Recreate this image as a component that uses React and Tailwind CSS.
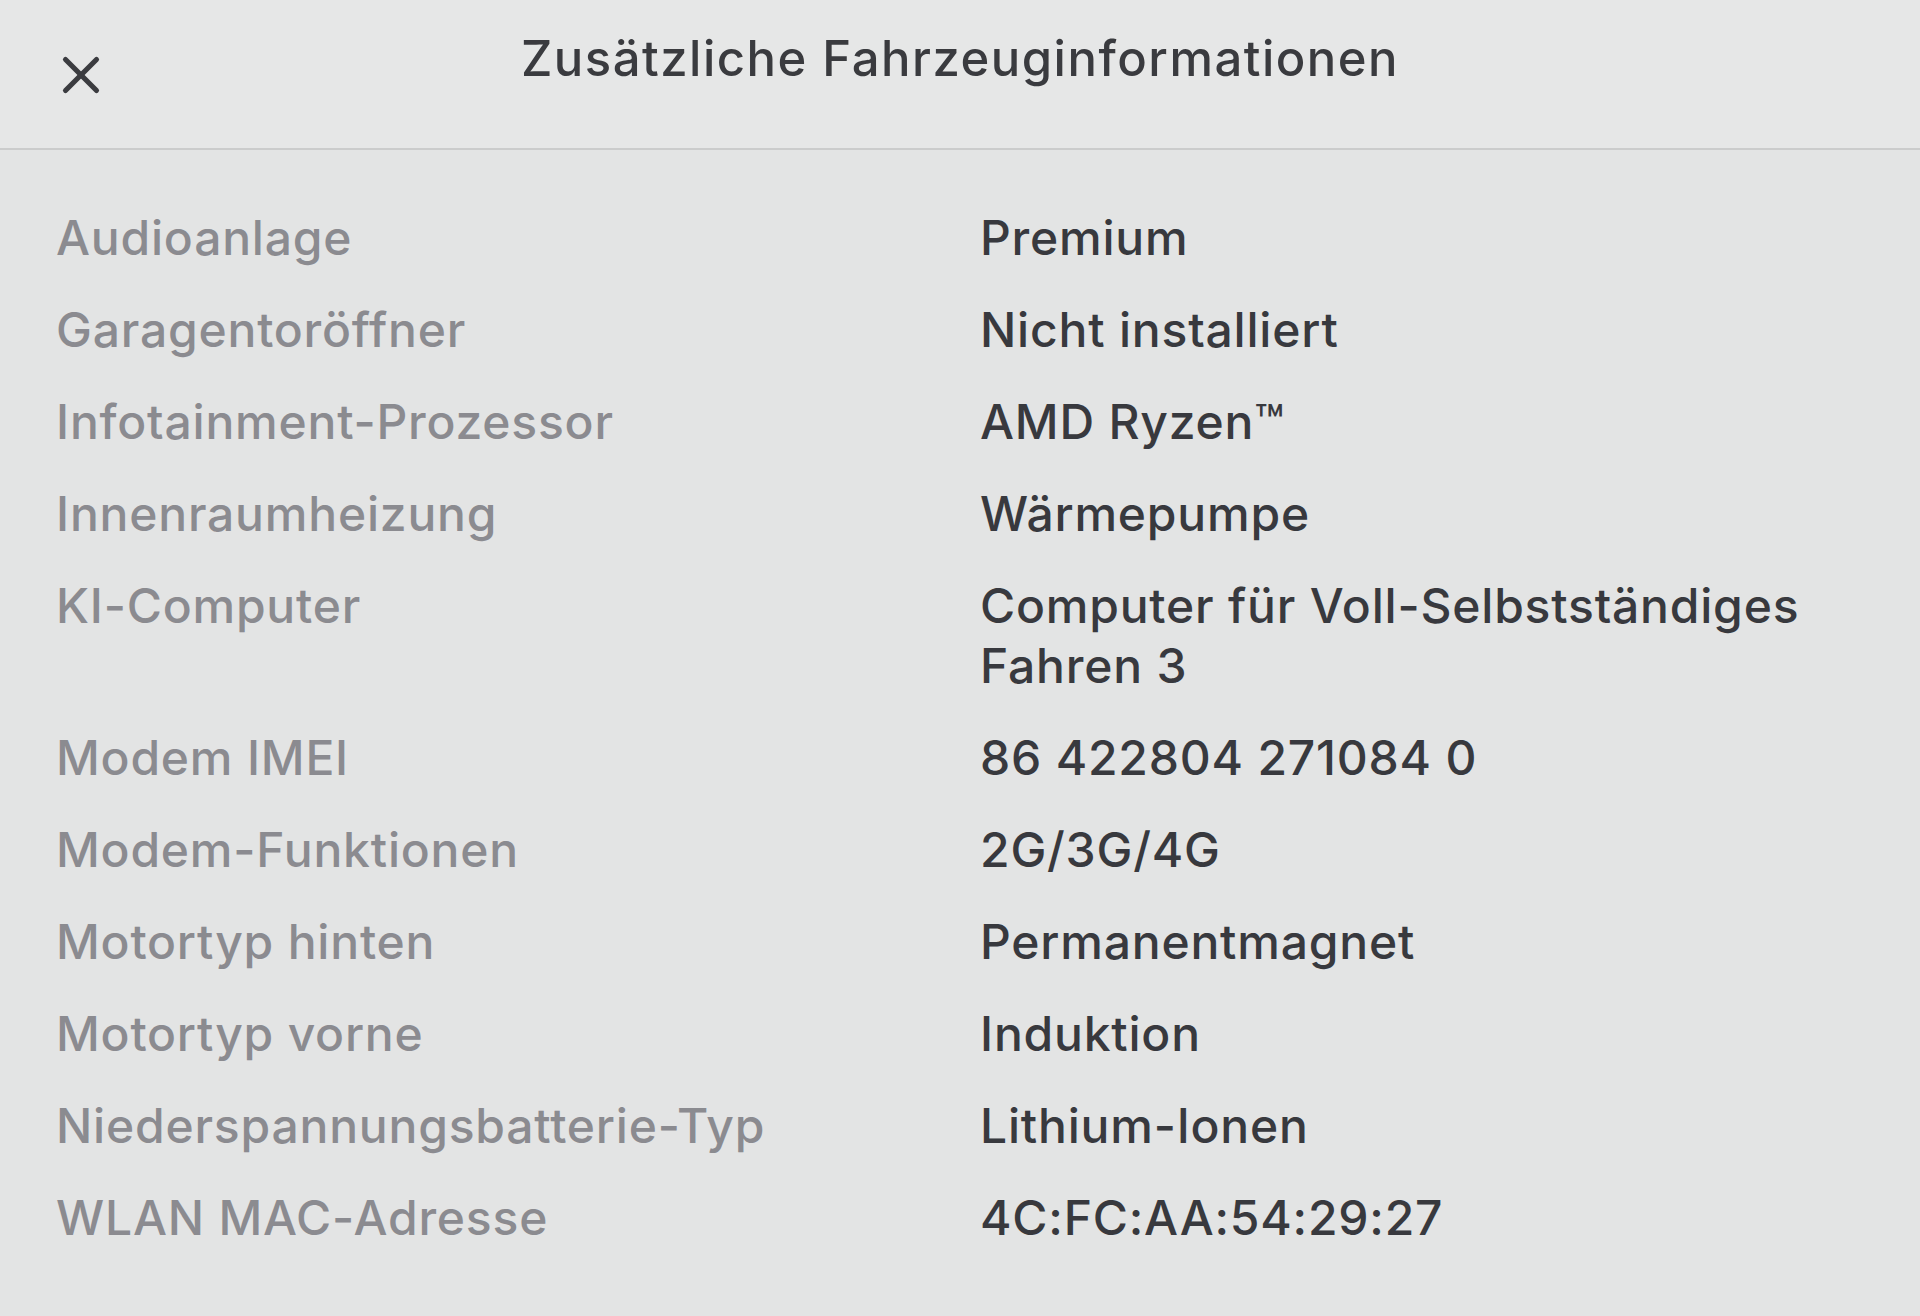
import { X } from 'lucide-react'

const rows = [
  ['Audioanlage', 'Premium'],
  ['Garagentoröffner', 'Nicht installiert'],
  ['Infotainment-Prozessor', 'AMD Ryzen™'],
  ['Innenraumheizung', 'Wärmepumpe'],
  ['KI-Computer', 'Computer für Voll-Selbstständiges Fahren 3'],
  ['Modem IMEI', '86 422804 271084 0'],
  ['Modem-Funktionen', '2G/3G/4G'],
  ['Motortyp hinten', 'Permanentmagnet'],
  ['Motortyp vorne', 'Induktion'],
  ['Niederspannungsbatterie-Typ', 'Lithium-Ionen'],
  ['WLAN MAC-Adresse', '4C:FC:AA:54:29:27'],
]

export default function App() {
  return (
    <div
      className="w-[1920px] h-[1316px] bg-[#e3e4e4] overflow-hidden"
      style={{ fontFamily: 'Inter, "Open Sans", sans-serif' }}
    >
      {/* Header */}
      <div className="relative h-[150px] flex items-center justify-center border-b-2 border-[#cbcccc] bg-[#e6e7e7]">
        <button className="absolute left-[50px] top-[44px] text-[#3b3c40]">
          <X size={62} strokeWidth={2} />
        </button>
        <h1 className="-mt-[30px] text-[49px] font-medium text-[#3a3b3f] tracking-[1.5px]">
          Zusätzliche Fahrzeuginformationen
        </h1>
      </div>

      {/* Info list */}
      <div className="pt-[58px] pl-[56px] pr-[60px] flex flex-col gap-[32px]">
        {rows.map(([label, value]) => (
          <div key={label} className="flex text-[48px] leading-[60px] font-medium tracking-[0.8px]">
            <div className="w-[924px] shrink-0 text-[#8b8b90]">{label}</div>
            <div className="w-[900px] text-[#38393e]">{value}</div>
          </div>
        ))}
      </div>
    </div>
  )
}
